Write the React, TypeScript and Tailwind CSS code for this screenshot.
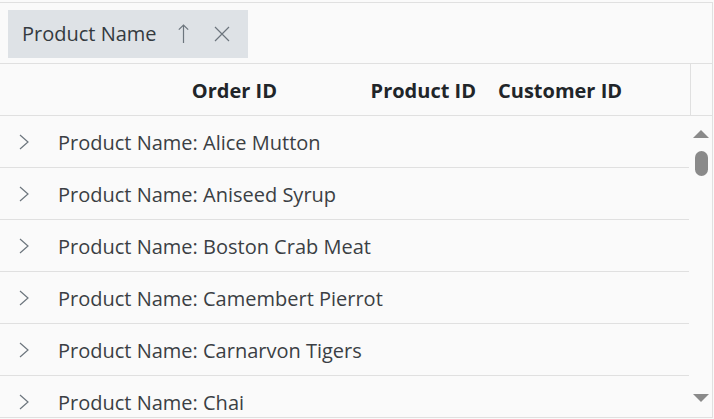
import React from "react";

const ROWS = [
  "Alice Mutton",
  "Aniseed Syrup",
  "Boston Crab Meat",
  "Camembert Pierrot",
  "Carnarvon Tigers",
  "Chai",
];

const FONT = "font-['Open_Sans','Noto_Sans',sans-serif]";

function Chevron() {
  return (
    <svg width="10" height="16" viewBox="0 0 10 16" className="shrink-0">
      <path d="M1 1 L9 8 L1 15" fill="none" stroke="#6c757d" strokeWidth="1.2" />
    </svg>
  );
}

function GroupChip() {
  return (
    <div className="flex h-[48px] w-[240px] items-center bg-[#dee2e6] pl-[14px]">
      <span className="text-[20px] text-[#343a40]">Product Name</span>
      <svg width="11" height="19" viewBox="0 0 11 19" className="ml-[21px]">
        <path d="M5.5 1 V19 M0.8 5.7 L5.5 1 L10.2 5.7" fill="none" stroke="#6c757d" strokeWidth="1.2" />
      </svg>
      <svg width="16" height="16" viewBox="0 0 16 16" className="ml-[25px]">
        <path d="M1 1 L15 15 M15 1 L1 15" fill="none" stroke="#6c757d" strokeWidth="1.2" />
      </svg>
    </div>
  );
}

function Scrollbar() {
  return (
    <div className="flex w-[22px] flex-col items-center pt-[14px]">
      <svg width="16" height="8" viewBox="0 0 16 8">
        <path d="M8 0 L16 8 L0 8 Z" fill="#8a8a8a" />
      </svg>
      <div className="mt-[13px] h-[25px] w-[13px] rounded-full bg-[#8a8a8a]" />
      <div className="flex-1" />
      <svg width="16" height="8" viewBox="0 0 16 8" className="mb-[15px]">
        <path d="M0 0 L16 0 L8 8 Z" fill="#8a8a8a" />
      </svg>
    </div>
  );
}

export default function App() {
  return (
    <div className={`h-[419px] w-[714px] overflow-hidden bg-[#fafafa] pt-[2px] ${FONT}`}>
      <div className="w-[713px] border-t border-r border-b border-[#e0e0e0]">
        <div className="flex h-[61px] items-center border-b border-[#e0e0e0] pl-[8px] pt-px">
          <GroupChip />
        </div>

        <div className="flex h-[52px] border-b border-[#e0e0e0] text-[20px] font-bold text-[#212529]">
          <div className="flex w-[690px] items-center pt-[2px]">
            <div className="w-[48px]" />
            <div className="w-[242px] pr-[13px] text-right">Order ID</div>
            <div className="w-[198px] pr-[12px] text-right">Product ID</div>
            <div className="pl-[10px]">Customer ID</div>
          </div>
          <div className="w-[22px] border-l border-[#e0e0e0]" />
        </div>

        <div className="flex h-[301px]">
          <div className="w-[689px]">
            {ROWS.map((name) => (
              <div
                key={name}
                className="flex h-[52px] items-center border-b border-[#e0e0e0] pl-[19px] text-[20px] text-[#3b3f44]"
              >
                <Chevron />
                <span className="ml-[29px] pt-[2px]">Product Name: {name}</span>
              </div>
            ))}
          </div>
          <div className="w-px" />
          <Scrollbar />
        </div>
      </div>
    </div>
  );
}
